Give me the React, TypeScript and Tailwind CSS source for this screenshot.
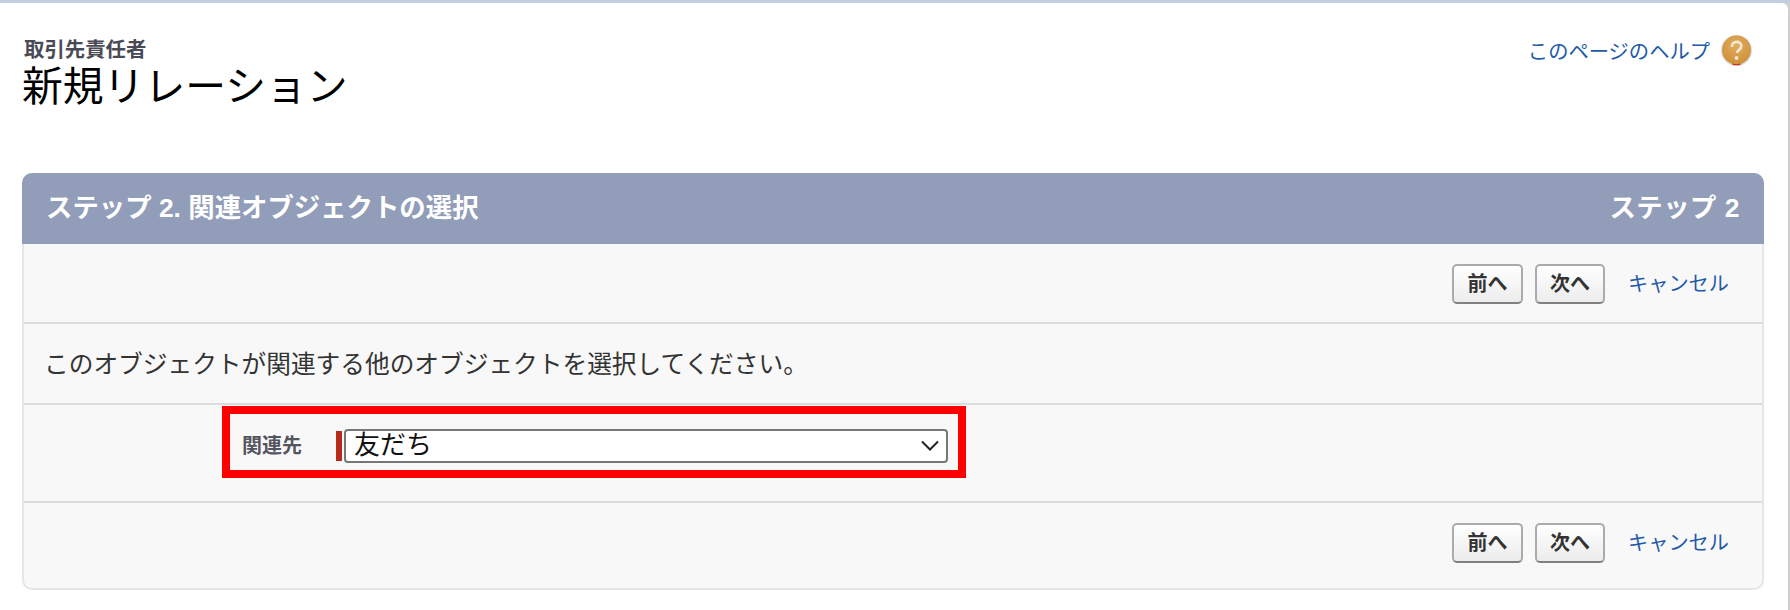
const JP = "font-['Liberation_Sans','Noto_Sans_CJK_JP',sans-serif]";

function HelpIcon() {
  return (
    <svg width="31" height="31" viewBox="0 0 30 30" className="block">
      <defs>
        <radialGradient id="helpGrad" cx="50%" cy="35%" r="70%">
          <stop offset="0%" stopColor="#e3ab5e" />
          <stop offset="100%" stopColor="#cc8f36" />
        </radialGradient>
      </defs>
      <circle cx="15" cy="15" r="15" fill="#dcdcdc" />
      <circle cx="15" cy="14.5" r="14" fill="url(#helpGrad)" />
      <path d="M11 28.1a14 14 0 0 0 8 0" fill="none" stroke="#c8392b" strokeWidth="1.2" />
      <path
        d="M10.5 11.5c0-3 2-4.8 4.6-4.8s4.5 1.6 4.5 4c0 2-1 3-2.4 4-1.1.8-1.5 1.3-1.5 2.8"
        fill="none"
        stroke="#f6e9d4"
        strokeWidth="2.6"
      />
      <circle cx="15" cy="22.2" r="1.8" fill="#f6e9d4" />
    </svg>
  );
}

function Buttons() {
  return (
    <div className="flex items-center justify-end">
      <button className="w-[71px] h-[40px] rounded-[5px] border-2 border-[#ababab] border-b-[#808080] bg-gradient-to-b from-white to-[#ececec] text-[20px] font-bold text-[#333]">
        前へ
      </button>
      <button className="ml-[12px] w-[70px] h-[40px] rounded-[5px] border-2 border-[#ababab] border-b-[#808080] bg-gradient-to-b from-white to-[#ececec] text-[20px] font-bold text-[#333]">
        次へ
      </button>
      <a className="ml-[23px] mr-[33px] text-[20.2px] text-[#1e5aa8]">キャンセル</a>
    </div>
  );
}

export default function App() {
  return (
    <div className={`h-[610px] w-[1790px] overflow-hidden bg-[#cfcfcf] ${JP}`}>
      <div className="h-[3px] bg-[#c5cde0]" />
      <div className="h-[607px] w-[1788px] rounded-tr-[6px] bg-white pl-[22px] pr-[24px]">
        <div className="flex h-[170px] justify-between">
          <div className="pt-[34px]">
            <div className="pl-[2px] text-[20.4px] font-bold leading-[26px] text-[#4a4a56]">取引先責任者</div>
            <h1 className="text-[40.8px] leading-[48px] text-black">新規リレーション</h1>
          </div>
          <div className="flex h-fit items-center pt-[31px] pr-[12px]">
            <a className="pt-[3px] text-[20.3px] text-[#1e5aa8]">このページのヘルプ</a>
            <span className="ml-[11px]">
              <HelpIcon />
            </span>
          </div>
        </div>

        <div className="h-[417px] rounded-[10px] bg-[#f8f8f8] border-2 border-t-0 border-[#e6e6e6]">
          <div className="-mx-[2px] flex h-[71px] items-center justify-between rounded-t-[10px] bg-[#929db9] pl-[24px] pr-[24px] pt-[1px] text-[26.4px] font-bold text-white">
            <span>ステップ 2. 関連オブジェクトの選択</span>
            <span className="tracking-[0.5px]">ステップ 2</span>
          </div>
          <div className="h-[80px] border-b-2 border-[#dcdcdc] pt-[20px]">
            <Buttons />
          </div>
          <div className="flex h-[81px] items-center border-b-2 border-[#dcdcdc] pl-[20px] pt-[3px] text-[24.7px] text-[#333]">
            このオブジェクトが関連する他のオブジェクトを選択してください。
          </div>
          <div className="h-[98px] border-b-2 border-[#dcdcdc] pl-[198px] pt-[1px]">
            <div className="flex h-[72px] w-[744px] items-center border-[8px] border-[#ff0000] pl-[12px] pt-[7px]">
              <span className="w-[94px] text-[20px] font-bold text-[#54545f]">関連先</span>
              <span className="h-[30px] w-[6px] bg-[#b92a1c]" />
              <div className="ml-[2px] flex h-[34px] w-[604px] items-center justify-between rounded-[4px] border-2 border-[#777] bg-white pl-[8px] pr-[7px] text-[26px] text-[#111]">
                <span>友だち</span>
                <svg width="18" height="11" viewBox="0 0 18 11" fill="none" stroke="#222" strokeWidth="2">
                  <path d="M1 1.5l8 8 8-8" />
                </svg>
              </div>
            </div>
          </div>
          <div className="pt-[20px]">
            <Buttons />
          </div>
        </div>
      </div>
    </div>
  );
}
